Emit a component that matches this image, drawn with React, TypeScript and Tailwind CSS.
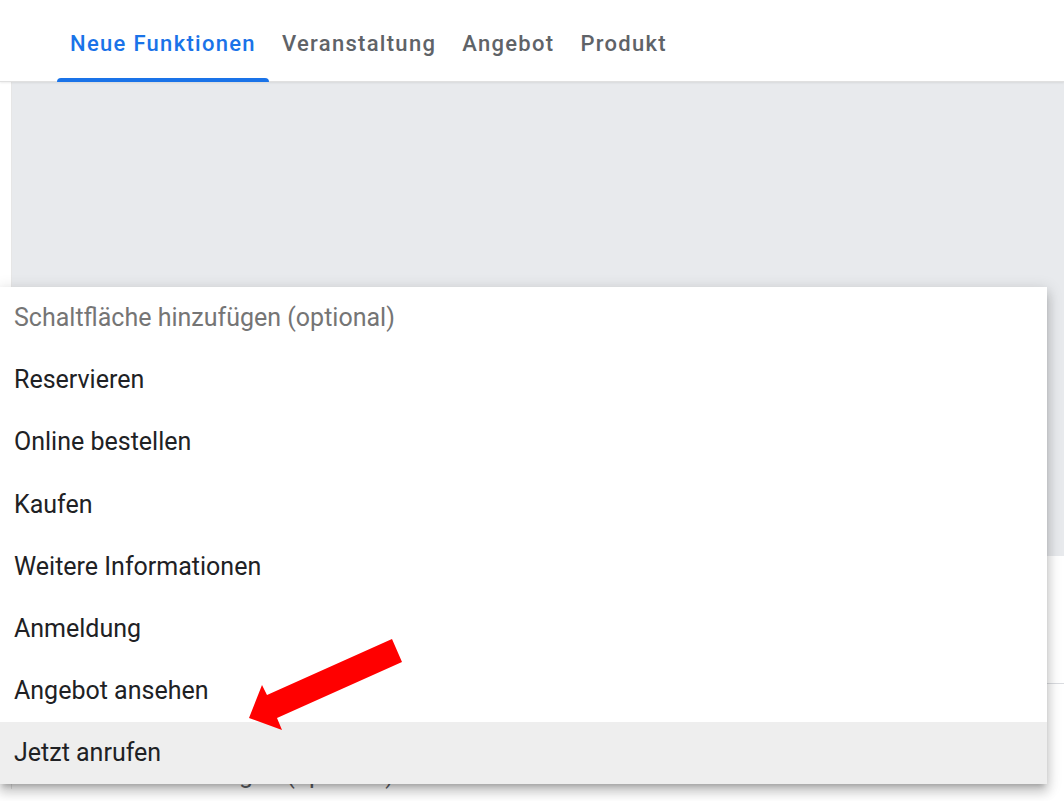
import React from "react";

const items = [
  "Reservieren",
  "Online bestellen",
  "Kaufen",
  "Weitere Informationen",
  "Anmeldung",
  "Angebot ansehen",
  "Jetzt anrufen",
];

export default function App() {
  return (
    <div className="relative w-[1064px] h-[801px] overflow-hidden bg-white" style={{ fontFamily: "Roboto, 'Noto Sans', Arial, sans-serif" }}>
      {/* header tabs */}
      <div className="h-[82px] bg-white border-b border-[#e0e0e0] flex items-end pl-[57px] relative z-10 shadow-[0_1px_2px_rgba(0,0,0,0.08)]">
        {[
          ["Neue Funktionen", true],
          ["Veranstaltung", false],
          ["Angebot", false],
          ["Produkt", false],
        ].map(([label, active]) => (
          <div key={label as string} className="relative h-full flex items-center pt-[6px] px-[13px]">
            <span
              className={`text-[22px] font-medium tracking-[1.3px] ${active ? "text-[#1a73e8]" : "text-[#5f6368]"}`}
            >
              {label as string}
            </span>
            {active && (
              <div className="absolute left-0 right-0 bottom-[-1px] h-[4px] rounded-t-[4px] bg-[#1a73e8]" />
            )}
          </div>
        ))}
      </div>

      {/* body */}
      <div className="flex">
        <div className="w-[12px] shrink-0 bg-white border-r border-[#e6e6e6]" />
        <div className="flex-1 flex flex-col">
          <div className="h-[474px] bg-[#e8eaed]" />
          <div className="h-[128px] bg-white border-b border-[#dadce0]" />
          <div className="pt-[76px] pl-[1px] text-[25px] leading-[29px] text-[#5f6368]">Schaltfläche hinzufügen (optional)</div>
        </div>
      </div>

      {/* dropdown menu */}
      <div className="absolute left-0 top-[287px] w-[1047px] bg-white shadow-[0_5px_5px_-3px_rgba(0,0,0,0.2),0_8px_10px_1px_rgba(0,0,0,0.14),0_3px_14px_2px_rgba(0,0,0,0.12)]">
        <div className="h-[62.1px] flex items-center pl-[14px] text-[25px] text-[#757575]">
          Schaltfläche hinzufügen (optional)
        </div>
        {items.map((it, i) => (
          <div
            key={it}
            className={`h-[62.1px] flex items-center pl-[14px] text-[25px] text-[#202124] ${i === items.length - 1 ? "bg-[#eeeeee]" : ""}`}
          >
            {it}
          </div>
        ))}
      </div>

      {/* red arrow annotation */}
      <svg className="absolute left-0 top-0 pointer-events-none" width="1064" height="801">
        <polygon
          points="249,718 262,685 267,695 392,639 402,662 277,718 282,730"
          fill="#ff0000"
        />
      </svg>
    </div>
  );
}
